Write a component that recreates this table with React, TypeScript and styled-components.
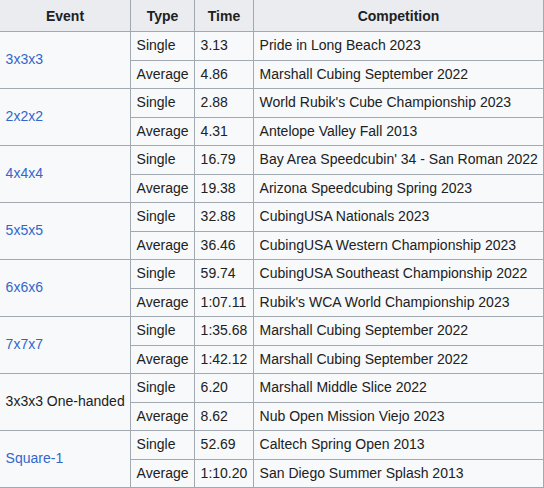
import styled, { createGlobalStyle } from 'styled-components';

const GlobalStyle = createGlobalStyle`
  html, body {
    margin: 0;
    padding: 0;
    background: #ffffff;
    overflow: hidden;
  }
`;

const Page = styled.div`
  width: 544px;
  height: 488px;
  overflow: hidden;
  background: #ffffff;
`;

const Table = styled.table`
  margin: -1px 0 0 -1px;
  width: 544px;
  table-layout: fixed;
  border-collapse: collapse;
  background: #f8f9fa;
  color: #202122;
  font-family: 'Liberation Sans', Arial, sans-serif;
  font-size: 14px;
  border: 1px solid #a2a9b1;
`;

const HeadCell = styled.th`
  background: #eaecf0;
  border: 1px solid #a2a9b1;
  padding: 4px 5.6px 3px;
  height: 24px;
  line-height: 22px;
  font-weight: bold;
  text-align: center;
`;

const Cell = styled.td`
  border: 1px solid #a2a9b1;
  padding: 3px 5.6px;
  height: 21.5px;
  line-height: 21.5px;
  text-align: left;
  vertical-align: middle;
  white-space: nowrap;
`;

const EventLink = styled.a`
  color: #3366cc;
  text-decoration: none;
`;

type Result = { type: string; time: string; competition: string };
type Row = { event: string; link: boolean; results: Result[] };

const rows: Row[] = [
  {
    event: '3x3x3',
    link: true,
    results: [
      { type: 'Single', time: '3.13', competition: 'Pride in Long Beach 2023' },
      { type: 'Average', time: '4.86', competition: 'Marshall Cubing September 2022' },
    ],
  },
  {
    event: '2x2x2',
    link: true,
    results: [
      { type: 'Single', time: '2.88', competition: "World Rubik's Cube Championship 2023" },
      { type: 'Average', time: '4.31', competition: 'Antelope Valley Fall 2013' },
    ],
  },
  {
    event: '4x4x4',
    link: true,
    results: [
      { type: 'Single', time: '16.79', competition: "Bay Area Speedcubin' 34 - San Roman 2022" },
      { type: 'Average', time: '19.38', competition: 'Arizona Speedcubing Spring 2023' },
    ],
  },
  {
    event: '5x5x5',
    link: true,
    results: [
      { type: 'Single', time: '32.88', competition: 'CubingUSA Nationals 2023' },
      { type: 'Average', time: '36.46', competition: 'CubingUSA Western Championship 2023' },
    ],
  },
  {
    event: '6x6x6',
    link: true,
    results: [
      { type: 'Single', time: '59.74', competition: 'CubingUSA Southeast Championship 2022' },
      { type: 'Average', time: '1:07.11', competition: "Rubik's WCA World Championship 2023" },
    ],
  },
  {
    event: '7x7x7',
    link: true,
    results: [
      { type: 'Single', time: '1:35.68', competition: 'Marshall Cubing September 2022' },
      { type: 'Average', time: '1:42.12', competition: 'Marshall Cubing September 2022' },
    ],
  },
  {
    event: '3x3x3 One-handed',
    link: false,
    results: [
      { type: 'Single', time: '6.20', competition: 'Marshall Middle Slice 2022' },
      { type: 'Average', time: '8.62', competition: 'Nub Open Mission Viejo 2023' },
    ],
  },
  {
    event: 'Square-1',
    link: true,
    results: [
      { type: 'Single', time: '52.69', competition: 'Caltech Spring Open 2013' },
      { type: 'Average', time: '1:10.20', competition: 'San Diego Summer Splash 2013' },
    ],
  },
];

export default function App() {
  return (
    <>
      <GlobalStyle />
      <Page>
        <Table>
          <colgroup>
            <col style={{ width: 131 }} />
            <col style={{ width: 64 }} />
            <col style={{ width: 59 }} />
            <col style={{ width: 290 }} />
          </colgroup>
          <thead>
            <tr>
              <HeadCell>Event</HeadCell>
              <HeadCell>Type</HeadCell>
              <HeadCell>Time</HeadCell>
              <HeadCell>Competition</HeadCell>
            </tr>
          </thead>
          <tbody>
            {rows.map((row) =>
              row.results.map((r, i) => (
                <tr key={row.event + r.type}>
                  {i === 0 && (
                    <Cell rowSpan={row.results.length}>
                      {row.link ? <EventLink href="#">{row.event}</EventLink> : row.event}
                    </Cell>
                  )}
                  <Cell>{r.type}</Cell>
                  <Cell>{r.time}</Cell>
                  <Cell>{r.competition}</Cell>
                </tr>
              ))
            )}
          </tbody>
        </Table>
      </Page>
    </>
  );
}
